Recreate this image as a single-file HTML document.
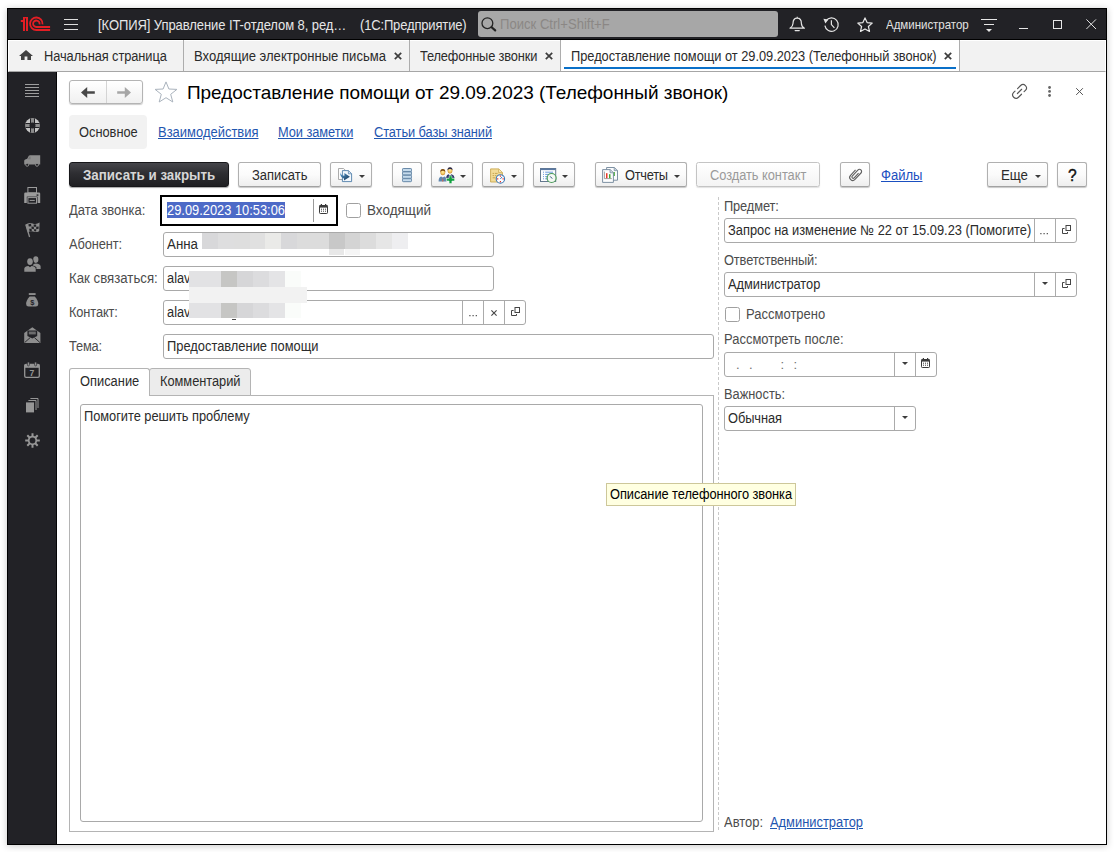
<!DOCTYPE html>
<html><head><meta charset="utf-8">
<style>
*{box-sizing:border-box;margin:0;padding:0}
html,body{width:1114px;height:852px;overflow:hidden;background:#fff}
body{font-family:"Liberation Sans",sans-serif;font-size:13px;color:#333;position:relative}
.a{position:absolute}
svg{position:absolute;overflow:visible}
#win{position:absolute;left:7px;top:8px;width:1100px;height:837px;border:1px solid #000;background:#fff;box-shadow:0 1px 7px rgba(0,0,0,.22)}
#tb{position:absolute;left:8px;top:9px;width:1098px;height:31px;background:#222226;border-bottom:1px solid #000}
#tabs{position:absolute;left:8px;top:40px;width:1098px;height:32px;background:#f2f2f2;border:1px solid #fff;border-bottom:1px solid #a6a6a6}
#side{position:absolute;left:8px;top:72px;width:49px;height:772px;background:#222226;border-right:1px solid #050506}
.t{position:absolute;white-space:nowrap;line-height:16px;font-size:13px}
.sep{position:absolute;top:40px;width:1px;height:31px;background:#adadad}
.btn{position:absolute;top:163px;height:25px;border:1px solid #b0b0b0;border-bottom-color:#a2a2a2;border-radius:2.5px;background:linear-gradient(#ffffff 0%,#fbfbfb 50%,#eeeeee 100%);box-shadow:0 1px 1px rgba(0,0,0,.22)}
.inp{position:absolute;height:25px;border:1px solid #a9a9a9;border-radius:3px;background:#fff}
.dv{position:absolute;width:1px;background:#ababab}
.lbl{color:#4c4c4c}
.val{color:#2b2b2b}
.lnk{color:#1f56b0;text-decoration:underline;text-underline-offset:1px}
.chk{position:absolute;width:15px;height:15px;border:1px solid #a0a0a0;border-radius:2.5px;background:#fff}
.arr{position:absolute;width:0;height:0;border-left:3px solid transparent;border-right:3px solid transparent;border-top:3px solid #3c3c3c}
.mz{position:absolute}
</style></head><body>
<div id="win"></div>
<div id="tb"></div>
<div id="tabs"></div>
<div id="side"></div>

<!-- ===== title bar ===== -->
<svg style="left:20px;top:16px" width="31" height="16" viewBox="0 0 31 16"><g fill="#e31e24"><rect x="3" y="1" width="2" height="14"></rect><rect x="6" y="1" width="2" height="14"></rect><rect x="3" y="1" width="5" height="1.4"></rect><rect x="0.8" y="4" width="2.4" height="2"></rect></g><g fill="none" stroke="#e31e24" stroke-width="1.8"><path d="M22.55 8.3 A6.25 6.25 0 1 0 16.3 14 H30.1"></path><path d="M19.55 8.3 A3.25 3.25 0 1 0 16.3 11 H30.1"></path></g></svg>
<div class="a" style="left:64px;top:19px;width:14px;height:1px;background:#dedede"></div>
<div class="a" style="left:64px;top:24px;width:14px;height:1px;background:#dedede"></div>
<div class="a" style="left:64px;top:29px;width:14px;height:1px;background:#dedede"></div>
<div class="t" style="left: 97.75px; color: rgb(230, 230, 230); font-size: 14px; letter-spacing: -0.093px; transform: scaleX(0.93); transform-origin: 0px 50%; top: 16.65px;">[КОПИЯ] Управление IT-отделом 8, ред…</div>
<div class="t" style="left: 360px; color: rgb(230, 230, 230); font-size: 14px; letter-spacing: -0.181px; transform: scaleX(0.93); transform-origin: 0px 50%; top: 16.65px;">(1С:Предприятие)</div>
<div class="a" style="left:478px;top:11px;width:300px;height:26px;background:#a7a7a7;border-radius:3px"></div>
<svg style="left:481px;top:17px" width="16" height="15" viewBox="0 0 16 15"><circle cx="6.4" cy="6.2" r="5.4" fill="none" stroke="#242424" stroke-width="1.3"></circle><path d="M10.6 10.2 L14.2 13.4" stroke="#242424" stroke-width="2.2" stroke-linecap="round"></path></svg>
<div class="t" style="left: 500px; color: rgb(139, 135, 133); font-size: 14px; letter-spacing: 0px; transform: scaleX(0.935); transform-origin: 0px 50%; top: 15.75px;">Поиск Ctrl+Shift+F</div>
<!-- bell -->
<svg style="left:789px;top:16px" width="16" height="17" viewBox="0 0 16 17"><path d="M8.2 0.8 V2.2 M8.2 2.2 C5 2.2 4 4.8 4 7.4 C4 10 2.8 11 1 12.2 H15.4 C13.6 11 12.4 10 12.4 7.4 C12.4 4.8 11.4 2.2 8.2 2.2 Z" fill="none" stroke="#e4e4e4" stroke-width="1.2" stroke-linejoin="round"></path><path d="M6.2 14.6 H10.2" stroke="#e4e4e4" stroke-width="1.4" stroke-linecap="round"></path></svg>
<!-- history -->
<svg style="left:823px;top:16px" width="17" height="17" viewBox="0 0 17 17"><path d="M3 4.8 A6.7 6.7 0 1 1 1.9 9.6" fill="none" stroke="#e4e4e4" stroke-width="1.2"></path><path d="M0.4 2.8 L5.4 3.4 L2.4 7.6 Z" fill="#e4e4e4"></path><path d="M8.4 4.2 V8.6 L11.4 11.8" fill="none" stroke="#e4e4e4" stroke-width="1.2"></path></svg>
<!-- star -->
<svg style="left:857px;top:17px" width="16" height="15" viewBox="0 0 16 15"><path d="M8 0.9 L10.1 5.6 L15.2 6.1 L11.4 9.5 L12.5 14.4 L8 11.9 L3.5 14.4 L4.6 9.5 L0.8 6.1 L5.9 5.6 Z" fill="none" stroke="#e8e8e8" stroke-width="1.2" stroke-linejoin="round"></path></svg>
<div class="t" style="left: 885.5px; color: rgb(226, 226, 226); font-size: 12.4px; letter-spacing: -0.033px; transform: scaleX(0.93); transform-origin: 0px 50%; top: 17.45px;">Администратор</div>
<!-- menu lines -->
<div class="a" style="left:981px;top:19px;width:16px;height:1.4px;background:#e6e6e6"></div>
<div class="a" style="left:984px;top:24px;width:10px;height:1.4px;background:#e6e6e6"></div>
<div class="a" style="left:986px;top:29px;width:0;height:0;border-left:3px solid transparent;border-right:3px solid transparent;border-top:3px solid #e6e6e6"></div>
<!-- window controls -->
<div class="a" style="left:1019px;top:27.5px;width:9px;height:1.3px;background:#e6e6e6"></div>
<div class="a" style="left:1053px;top:20px;width:9px;height:9px;border:1.3px solid #e6e6e6"></div>
<svg style="left:1086px;top:19px" width="11" height="11" viewBox="0 0 11 11"><path d="M0.4 0.4 L10 10 M10 0.4 L0.4 10" stroke="#e0e0e0" stroke-width="1"></path></svg>

<!-- ===== open-windows tab strip ===== -->
<svg style="left:18.5px;top:50px" width="14" height="10" viewBox="0 0 14 10"><path d="M7 0 L14 6 H12 V10 H8.4 V6.4 H5.6 V10 H2 V6 H0 Z" fill="#424242"></path></svg>
<div class="t val" style="left: 44px; letter-spacing: -0.084px; font-size: 13.8px; transform: scaleX(0.93); transform-origin: 0px 50%; top: 48.72px;">Начальная страница</div>
<div class="sep" style="left:183px"></div>
<div class="t val" style="left: 193.9px; letter-spacing: 0px; font-size: 13.8px; transform: scaleX(0.9474); transform-origin: 0px 50%; top: 48.72px;">Входящие электронные письма</div>
<svg style="left:393.5px;top:52px" width="8" height="8" viewBox="0 0 8 8"><path d="M0.8 0.8 L7.2 7.2 M7.2 0.8 L0.8 7.2" stroke="#3d3d3d" stroke-width="1.7"></path></svg>
<div class="sep" style="left:409px"></div>
<div class="t val" style="left: 419.5px; letter-spacing: -0.162px; font-size: 13.8px; transform: scaleX(0.93); transform-origin: 0px 50%; top: 48.72px;">Телефонные звонки</div>
<svg style="left:544.5px;top:52px" width="8" height="8" viewBox="0 0 8 8"><path d="M0.8 0.8 L7.2 7.2 M7.2 0.8 L0.8 7.2" stroke="#3d3d3d" stroke-width="1.7"></path></svg>
<div class="sep" style="left:560px"></div>
<div class="a" style="left:561px;top:40px;width:398px;height:31px;background:#fff"></div>
<div class="t val" style="left: 571px; letter-spacing: -0.029px; font-size: 13.8px; transform: scaleX(0.93); transform-origin: 0px 50%; top: 48.72px;">Предоставление помощи от 29.09.2023 (Телефонный звонок)</div>
<svg style="left:944px;top:52px" width="8" height="8" viewBox="0 0 8 8"><path d="M0.8 0.8 L7.2 7.2 M7.2 0.8 L0.8 7.2" stroke="#3d3d3d" stroke-width="1.7"></path></svg>
<div class="a" style="left:564px;top:67px;width:392px;height:2px;background:#0a70c8"></div>
<div class="sep" style="left:959px"></div>

<!-- ===== sidebar icons ===== -->
<svg style="left:25px;top:84px" width="14" height="13" viewBox="0 0 14 13"><path d="M0 0.5H14M0 3.5H14M0 6.5H14M0 9.5H14M0 12.5H14" stroke="#9e9e9e" stroke-width="1"></path></svg>
<!-- lifebuoy -->
<svg style="left:25px;top:117.7px" width="15" height="15" viewBox="0 0 15 15"><defs><clipPath id="lb"><circle cx="7.5" cy="7.5" r="7.4"></circle></clipPath></defs><g clip-path="url(#lb)"><rect width="15" height="15" fill="#c4c4c4"></rect><rect x="5" y="0" width="5" height="15" fill="#222226"></rect><rect x="0" y="5" width="15" height="5" fill="#222226"></rect><rect x="6" y="0" width="3" height="15" fill="#8c8c8c"></rect><rect x="0" y="6" width="15" height="3" fill="#8c8c8c"></rect></g><circle cx="7.5" cy="7.5" r="3" fill="#222226"></circle></svg>
<!-- van -->
<svg style="left:24px;top:154.5px" width="17" height="12" viewBox="0 0 17 12"><path d="M6 0.2 H16.2 V9.4 H0.2 V6 Q0.2 5 1.2 4.6 L3.2 3.8 L4.8 0.8 Q5.2 0.2 6 0.2 Z" fill="#8e8e8e"></path><path d="M5.4 1.4 L3.8 4.2 H6.6 V1.4 Z" fill="#7a7a7a"></path><circle cx="3.2" cy="9.8" r="1.5" fill="#222226" stroke="#8e8e8e" stroke-width="0.9"></circle><circle cx="13" cy="9.8" r="1.5" fill="#222226" stroke="#8e8e8e" stroke-width="0.9"></circle></svg>
<!-- printer -->
<svg style="left:24px;top:186.8px" width="17" height="17" viewBox="0 0 17 17"><rect x="3.9" y="0.5" width="8.6" height="5.4" fill="#222226" stroke="#9c9c9c" stroke-width="1"></rect><path d="M1.4 5.6 H15 Q16.2 5.6 16.2 6.8 V16 H0.2 V6.8 Q0.2 5.6 1.4 5.6 Z" fill="#9c9c9c"></path><rect x="2.8" y="9.6" width="10.8" height="7" fill="#222226"></rect><rect x="3.9" y="10.6" width="8.6" height="5.6" fill="#222226" stroke="#9c9c9c" stroke-width="1"></rect><path d="M5.6 13.4 H10.8" stroke="#9c9c9c" stroke-width="1"></path><rect x="12.6" y="7.4" width="1.8" height="1.4" fill="#222226"></rect></svg>
<!-- flag -->
<svg style="left:24.5px;top:222.4px" width="16" height="16" viewBox="0 0 16 16"><path d="M0.6 2.4 Q4 0 7.6 1.4 T14.6 0.6 L14.2 9.2 Q11 10.8 8 9.6 T3 10.6 Z" fill="#8e8e8e"></path><g fill="#222226"><path d="M3.4 2.2 L6 1.8 L6.4 4.2 L3.8 4.6Z"></path><path d="M8.6 2.4 L11.2 2.4 L11.2 4.8 L8.8 4.8Z"></path><path d="M6.4 4.4 L8.8 4.8 L9 7.2 L6.6 6.8Z"></path><path d="M11.2 4.8 L13.6 4.4 L13.6 6.8 L11.2 7.2Z"></path><path d="M4.2 6.8 L6.6 6.8 L6.8 9 L4.6 9.2Z"></path><path d="M9 7.2 L11.2 7.2 L11.2 9.4 L9.2 9.2Z"></path></g><path d="M0.8 2.6 L4.6 15" stroke="#8e8e8e" stroke-width="1.3"></path></svg>
<!-- people -->
<svg style="left:23.5px;top:256px" width="17" height="16" viewBox="0 0 17 16"><ellipse cx="11.8" cy="3.6" rx="2.6" ry="3.3" fill="#8e8e8e"></ellipse><path d="M8.6 13 L8.8 9.4 Q9.2 7.6 11.8 7.6 Q16.4 8 16.6 10.6 V13 Z" fill="#8e8e8e"></path><ellipse cx="6" cy="5.6" rx="3.5" ry="4.1" fill="#222226"></ellipse><path d="M-0.4 16 V11.6 Q0 9.4 6 9.2 Q12 9.4 12.4 11.6 V16 Z" fill="#222226"></path><ellipse cx="6" cy="5.6" rx="2.8" ry="3.4" fill="#8e8e8e"></ellipse><path d="M0.3 15.8 V12.4 Q0.8 10.4 4.4 10 L6 11.2 L7.6 10 Q11.2 10.4 11.7 12.4 V15.8 Z" fill="#8e8e8e"></path></svg>
<!-- money bag -->
<svg style="left:26px;top:292.5px" width="13" height="14" viewBox="0 0 13 14"><rect x="2.8" y="0.1" width="6.8" height="1.9" fill="#8e8e8e"></rect><path d="M3.6 3.4 H8.8 Q12.4 7.4 12.3 11 Q12.2 13.5 9.8 13.5 H2.6 Q0.2 13.5 0.1 11 Q0 7.4 3.6 3.4 Z" fill="#8e8e8e"></path><text x="6.2" y="12" font-size="7.4" font-weight="700" text-anchor="middle" fill="#222226" font-family="Liberation Sans">$</text></svg>
<!-- envelope -->
<svg style="left:24px;top:326.8px" width="17" height="16" viewBox="0 0 17 16"><path d="M0.2 6 L8.3 0.2 L16.4 6 V16 H0.2 Z" fill="#8e8e8e"></path><path d="M3.4 3.6 H13.2 V9 L8.3 11.6 L3.4 9 Z" fill="#222226"></path><path d="M4.8 5.2 H11.8 M4.8 6.8 H11.8" stroke="#8e8e8e" stroke-width="1"></path><path d="M0.6 15.6 L6.2 10.6 M16 15.6 L10.4 10.6" stroke="#222226" stroke-width="0.9"></path></svg>
<!-- calendar -->
<svg style="left:24px;top:362px" width="16" height="16" viewBox="0 0 16 16"><rect x="0.7" y="2.4" width="14.6" height="13" rx="1.4" fill="none" stroke="#969696" stroke-width="1.3"></rect><rect x="0.7" y="2.4" width="14.6" height="3.4" fill="#969696"></rect><rect x="3.4" y="0.1" width="2" height="3.8" rx="0.9" fill="#969696" stroke="#222226" stroke-width="0.6"></rect><rect x="10.6" y="0.1" width="2" height="3.8" rx="0.9" fill="#969696" stroke="#222226" stroke-width="0.6"></rect><text x="8" y="13.8" font-size="8.6" font-weight="700" text-anchor="middle" fill="#969696" font-family="Liberation Sans">7</text></svg>
<!-- stack -->
<svg style="left:25.8px;top:397.7px" width="13" height="15" viewBox="0 0 13 15"><path d="M4.4 0.5 H12 V10" fill="none" stroke="#969696" stroke-width="1"></path><path d="M2.4 2.5 H10 V12" fill="none" stroke="#969696" stroke-width="1"></path><rect x="0" y="4.4" width="8" height="10" fill="#969696"></rect></svg>
<!-- gear -->
<svg style="left:24.6px;top:432.8px" width="15" height="15" viewBox="0 0 15 15"><g stroke="#969696" stroke-width="2"><path d="M7.5 0.2 V14.8 M0.2 7.5 H14.8 M2.3 2.3 L12.7 12.7 M12.7 2.3 L2.3 12.7"></path></g><circle cx="7.5" cy="7.5" r="4.7" fill="#969696"></circle><circle cx="7.5" cy="7.5" r="2.9" fill="#222226"></circle></svg>

<!-- ===== form header ===== -->
<div class="a" style="left:69px;top:80px;width:74px;height:24px;border:1px solid #b4b4b4;border-radius:3px;background:linear-gradient(#fff,#f0f0f0);box-shadow:0 1px 1px rgba(0,0,0,.2)"></div>
<div class="dv" style="left:106px;top:81px;height:22px;background:#d4d4d4"></div>
<svg style="left:81px;top:87px" width="14" height="11" viewBox="0 0 14 11"><path d="M0 5.5 L6.2 0.1 V4.2 H13.8 V6.8 H6.2 V10.9 Z" fill="#484848"></path></svg>
<svg style="left:117px;top:87px" width="14" height="11" viewBox="0 0 14 11"><path d="M14 5.5 L7.8 0.1 V4.2 H0.2 V6.8 H7.8 V10.9 Z" fill="#a6a6a6"></path></svg>
<svg style="left:153.5px;top:81px" width="24" height="22" viewBox="0 0 24 22"><path d="M12 0.9 L14.9 8 L22.9 8.4 L16.7 13.3 L18.8 21 L12 16.7 L5.2 21 L7.3 13.3 L1.1 8.4 L9.1 8 Z" fill="#fff" stroke="#aab3bd" stroke-width="1" stroke-linejoin="miter"></path></svg>
<div class="t" style="left: 186.9px; font-size: 19px; line-height: 24px; color: rgb(0, 0, 0); letter-spacing: -0.035px; top: 80.82px;">Предоставление помощи от 29.09.2023 (Телефонный звонок)</div>
<!-- link / dots / close -->
<svg style="left:1011px;top:83px" width="17" height="17" viewBox="0 0 17 17"><g fill="none" stroke="#555" stroke-width="1.15" stroke-linecap="round" transform="translate(8.55,8.4) rotate(-45)"><path d="M0.6 -3.4 H4.9 A3.4 3.4 0 0 1 4.9 3.4 H3"></path><path d="M-0.6 3.4 H-4.9 A3.4 3.4 0 0 1 -4.9 -3.4 H-3"></path><path d="M-3 0 H3"></path></g></svg>



<svg style="left:1045px;top:84px" width="9" height="15" viewBox="0 0 9 15"><circle cx="4.55" cy="3.5" r="1.4" fill="#666"></circle><circle cx="4.55" cy="7.45" r="1.4" fill="#666"></circle><circle cx="4.55" cy="11.5" r="1.4" fill="#666"></circle></svg>
<svg style="left:1076px;top:88px" width="7" height="7" viewBox="0 0 7 7"><path d="M0.2 0.2 L6.9 6.9 M6.9 0.2 L0.2 6.9" stroke="#555" stroke-width="1"></path></svg>
<!-- navigation links -->
<div class="a" style="left:69px;top:115px;width:78px;height:34px;background:#f2f2f2;border-radius:4px"></div>
<div class="t" style="left: 79px; color: rgb(43, 43, 43); letter-spacing: -0.006px; font-size: 13.8px; transform: scaleX(0.93); transform-origin: 0px 50%; top: 125.47px;">Основное</div>
<div class="t lnk" style="left: 157.5px; letter-spacing: 0px; font-size: 13.8px; transform: scaleX(0.9399); transform-origin: 0px 50%; top: 125.47px;">Взаимодействия</div>
<div class="t lnk" style="left: 278.25px; letter-spacing: -0.065px; font-size: 13.8px; transform: scaleX(0.93); transform-origin: 0px 50%; top: 125.47px;">Мои заметки</div>
<div class="t lnk" style="left: 373.75px; letter-spacing: -0.084px; font-size: 13.8px; transform: scaleX(0.93); transform-origin: 0px 50%; top: 125.47px;">Статьи базы знаний</div>

<!-- ===== command bar ===== -->
<div class="a" style="left:69px;top:162px;width:160px;height:25px;border:1px solid #17171a;border-radius:3px;background:linear-gradient(#45454a 0%,#2e2e32 45%,#1f1f22 100%);box-shadow:0 1px 1px rgba(0,0,0,.35)"></div>
<div class="t" style="left: 82.75px; color: rgb(214, 214, 214); font-weight: 700; font-size: 14px; letter-spacing: 0px; transform: scaleX(0.9532); transform-origin: 0px 50%; top: 167.15px;">Записать и закрыть</div>
<div class="btn" style="left:238px;top:162px;width:83px"></div>
<div class="t val" style="left: 251.7px; letter-spacing: 0px; font-size: 13.8px; transform: scaleX(0.9395); transform-origin: 0px 50%; top: 168.22px;">Записать</div>

<div class="btn" style="left:330px;top:162px;width:42px"></div>
<svg style="left:338px;top:168px" width="14" height="14" viewBox="0 0 14 14"><defs><linearGradient id="ga" x1="0" y1="0" x2="1" y2="1"><stop offset="0" stop-color="#5aa2d8"></stop><stop offset="1" stop-color="#12304f"></stop></linearGradient></defs><path d="M0.5 0.5 H5.6 L7.4 2.3 V11.5 H0.5 Z" fill="#fcfcfc" stroke="#a2a2a2" stroke-width="0.9"></path><path d="M4.4 2.6 H10.6 L13.6 5.6 V13.6 H4.4 Z" fill="#f2f7fc" stroke="#4f7ea9" stroke-width="0.9"></path><path d="M10.4 2.8 V5.8 H13.4" fill="#cfe0ee" stroke="#4f7ea9" stroke-width="0.7"></path><path d="M2 4 Q2.8 7.6 6.4 7.8 V5 L11.9 8.8 L6 12.6 V10.4 Q2.2 10 2 4Z" fill="url(#ga)"></path></svg>
<div class="arr" style="left:359px;top:175px"></div>

<div class="btn" style="left:392px;top:162px;width:30px"></div>
<svg style="left:402px;top:168px" width="10" height="15" viewBox="0 0 10 15"><rect x="0.3" y="0.3" width="9.4" height="13.6" rx="1.4" fill="#7f9db8"></rect><rect x="0.5" y="0.5" width="9" height="3" rx="1" fill="#c6dbec" stroke="#6687a6" stroke-width="0.95"></rect><rect x="0.5" y="3.9" width="9" height="3" rx="1" fill="#c6dbec" stroke="#6687a6" stroke-width="0.95"></rect><rect x="0.5" y="7.3" width="9" height="3" rx="1" fill="#c6dbec" stroke="#6687a6" stroke-width="0.95"></rect><rect x="0.5" y="10.7" width="9" height="3" rx="1" fill="#c6dbec" stroke="#6687a6" stroke-width="0.95"></rect></svg>

<div class="btn" style="left:431px;top:162px;width:42px"></div>
<svg style="left:437.5px;top:166.5px" width="18" height="17" viewBox="0 0 18 17"><defs><radialGradient id="gf" cx="0.5" cy="0.45" r="0.6"><stop offset="0" stop-color="#fff2a8"></stop><stop offset="0.6" stop-color="#f0c25a"></stop><stop offset="1" stop-color="#b87a28"></stop></radialGradient></defs><path d="M8.2 11 Q8.4 7.6 10.4 7.2 L12 8.4 L13.6 7.2 Q16.2 7.8 16.6 11 Z" fill="#2a3266"></path><ellipse cx="12" cy="3.4" rx="2.4" ry="3" fill="url(#gf)"></ellipse><path d="M9.5 3.2 Q9.4 0.2 12 0.2 Q14.6 0.2 14.5 3.2 Q13.2 1.9 12 2 Q10.8 1.9 9.5 3.2Z" fill="#2c2a4c"></path><path d="M0.6 14.4 Q0.6 9.8 3.2 9.4 L4.8 10.6 L6.4 9.4 Q8.6 9.8 8.6 14.4 Z" fill="#5f86ae"></path><path d="M4.8 10.4 L4.2 14.4 H5.4 Z" fill="#e8603a"></path><ellipse cx="4.8" cy="5.2" rx="2.4" ry="3" fill="url(#gf)"></ellipse><path d="M2.3 5 Q2.2 2 4.8 2 Q7.4 2 7.3 5 Q6 3.7 4.8 3.8 Q3.6 3.7 2.3 5Z" fill="#7a4a12"></path><path d="M11.1 8.8 H13.9 V11.2 H16.6 V14 H13.9 V16.6 H11.1 V14 H8.4 V11.2 H11.1 Z" fill="#12a040" stroke="#fff" stroke-width="0.5"></path></svg>
<div class="arr" style="left:460px;top:175px"></div>

<div class="btn" style="left:482px;top:162px;width:42px"></div>
<svg style="left:490px;top:167.5px" width="16" height="16" viewBox="0 0 16 16"><path d="M0.6 0.9 H8.8 L12.4 4.4 V14 H0.6 Z" fill="#f3dc98" stroke="#c9a850" stroke-width="0.9" stroke-linejoin="round"></path><path d="M8.6 1.1 V4.6 H12.2" fill="#f8e8b8" stroke="#c9a850" stroke-width="0.7"></path><path d="M2.6 5.4 H4.2 M5 5.4 H7.6 M2.6 7.6 H4.2 M5 7.6 H6.4 M2.6 9.8 H5.4" stroke="#c2a048" stroke-width="0.9"></path><circle cx="10.4" cy="10.9" r="4.2" fill="#fff" stroke="#3d78b8" stroke-width="1.1"></circle><path d="M10.4 10.9 L12.2 8.8" stroke="#3d78b8" stroke-width="1"></path><path d="M10.4 7.6 V8.8 M10.4 13 V14.2 M7.1 10.9 H8.3 M12.5 10.9 H13.7" stroke="#e82a20" stroke-width="1.1"></path></svg>
<div class="arr" style="left:511px;top:175px"></div>

<div class="btn" style="left:533px;top:162px;width:42px"></div>
<svg style="left:540px;top:168px" width="17" height="16" viewBox="0 0 17 16"><rect x="0.5" y="0.5" width="15.2" height="13" fill="#fdfdfe" stroke="#64788e" stroke-width="1"></rect><rect x="0.5" y="0.5" width="15.2" height="1.6" fill="#5a78a2"></rect><path d="M3 4.2 H4 M5.2 4.2 H13 M3 6.4 H4 M5.2 6.4 H10.6 M3 8.6 H4 M5.2 8.6 H8 M3 10.8 H4 M5.2 10.8 H7" stroke="#5a90d8" stroke-width="0.9"></path><circle cx="11.6" cy="10" r="4.5" fill="#f4f8f4" stroke="#4a9a58" stroke-width="1.2"></circle><path d="M10.2 8.4 L12.2 10.6" fill="none" stroke="#2c4a7a" stroke-width="1"></path></svg>
<div class="arr" style="left:562px;top:175px"></div>

<div class="btn" style="left:595px;top:162px;width:92px"></div>
<svg style="left:602px;top:167px" width="17" height="16" viewBox="0 0 17 16"><path d="M4.6 0.5 H12.4 L15.5 3.4 V13.2 H4.6 Z" fill="#fbfcfd" stroke="#6f8598" stroke-width="0.9" stroke-linejoin="round"></path><path d="M12.2 0.7 V3.6 H15.3" fill="#c8d2dc" stroke="#6f8598" stroke-width="0.7"></path><rect x="11.2" y="5" width="1.6" height="4" fill="#3fa82e"></rect><path d="M0.6 2.6 H8.2 L11.4 5.6 V15.4 H0.6 Z" fill="#fdfdfe" stroke="#6f8598" stroke-width="0.9" stroke-linejoin="round"></path><path d="M8 2.8 V5.8 H11.2" fill="#c8d2dc" stroke="#6f8598" stroke-width="0.7"></path><path d="M2.4 4.6 V11.6 H9.8" fill="none" stroke="#8a8a8a" stroke-width="0.8"></path><rect x="4" y="6.2" width="1.5" height="5" fill="#e8392a"></rect><rect x="7" y="7.2" width="1.5" height="4" fill="#3fa82e"></rect></svg>
<div class="t val" style="left: 625px; letter-spacing: -0.289px; font-size: 13.8px; transform: scaleX(0.93); transform-origin: 0px 50%; top: 168.22px;">Отчеты</div>
<div class="arr" style="left:674px;top:175px"></div>

<div class="btn" style="left:696px;top:162px;width:124px;background:linear-gradient(#fff,#f4f4f4);border-color:#c4c4c4;box-shadow:0 1px 1px rgba(0,0,0,.12)"></div>
<div class="t" style="left: 709.75px; color: rgb(154, 154, 154); letter-spacing: -0.041px; font-size: 13.8px; transform: scaleX(0.93); transform-origin: 0px 50%; top: 168.22px;">Создать контакт</div>

<div class="btn" style="left:840px;top:162px;width:30px"></div>
<svg style="left:847px;top:167px" width="16" height="16" viewBox="0 0 16 16"><g transform="rotate(43 8 8) translate(-0.64 -0.8) scale(1.08)" fill="none" stroke="#606060" stroke-width="1.05"><path d="M5.2 4.4 V11.2 A2.8 2.8 0 0 0 10.8 11.2 V3 A2 2 0 0 0 6.8 3 V10.6 A1.2 1.2 0 0 0 9.2 10.6 V4.6"></path></g></svg>
<div class="t lnk" style="left: 881px; font-size: 14px; color: rgb(26, 79, 192); letter-spacing: 0px; transform: scaleX(0.9329); transform-origin: 0px 50%; top: 167.15px;">Файлы</div>

<div class="btn" style="left:987px;top:162px;width:61px"></div>
<div class="t val" style="left: 1001px; letter-spacing: 0px; font-size: 13.8px; transform: scaleX(0.9616); transform-origin: 0px 50%; top: 168.22px;">Еще</div>
<div class="arr" style="left:1035px;top:175px"></div>
<div class="btn" style="left:1057px;top:162px;width:30px"></div>
<div class="t" style="left: 1068.1px; color: rgb(17, 17, 17); font-weight: 400; font-size: 15.6px; -webkit-text-stroke: 0.4px rgb(17, 17, 17); top: 167.99px;">?</div>

<!--TOOLBAR_END-->
<!-- ===== left column ===== -->
<div class="t lbl" style="left: 68.75px; letter-spacing: 0px; font-size: 13.8px; transform: scaleX(0.941); transform-origin: 0px 50%; top: 203.22px;">Дата звонка:</div>
<div class="a" style="left:160px;top:195px;width:178px;height:31px;border:2px solid #000;background:#fff"></div>
<div class="a" style="left:166.5px;top:202px;width:118.5px;height:16px;background:#4d6ac7"></div>
<div class="t" style="left: 167px; color: rgb(255, 255, 255); letter-spacing: 0px; font-size: 13.8px; transform: scaleX(0.9321); transform-origin: 0px 50%; top: 203.22px;">29.09.2023 10:53:06</div>
<div class="dv" style="left:313px;top:199px;height:23px;background:#9a9a9a"></div>
<svg style="left:319px;top:204px" width="9" height="10" viewBox="0 0 9 10"><rect x="0.5" y="1.5" width="8" height="8" rx="0.8" fill="#fff" stroke="#3a3a3a" stroke-width="1"></rect><rect x="0.5" y="1.2" width="8" height="2.4" fill="#3a3a3a"></rect><rect x="1.8" y="0" width="1.2" height="2" fill="#3a3a3a"></rect><rect x="6" y="0" width="1.2" height="2" fill="#3a3a3a"></rect><path d="M2 5.2 H3 M4 5.2 H5 M6 5.2 H7 M2 7.2 H3 M4 7.2 H5 M6 7.2 H7" stroke="#3a3a3a" stroke-width="1"></path></svg>
<div class="chk" style="left:346px;top:203px"></div>
<div class="t lbl" style="left: 367px; letter-spacing: 0px; font-size: 13.8px; transform: scaleX(0.9778); transform-origin: 0px 50%; top: 203.22px;">Входящий</div>

<div class="t lbl" style="left: 68.75px; letter-spacing: -0.107px; font-size: 13.8px; transform: scaleX(0.93); transform-origin: 0px 50%; top: 236.97px;">Абонент:</div>
<div class="inp" style="left:163px;top:232px;width:331px"></div>
<div class="t val" style="left: 167px; letter-spacing: 0px; font-size: 13.8px; transform: scaleX(0.965); transform-origin: 0px 50%; top: 236.97px;">Анна</div>

<div class="t lbl" style="left: 68.75px; letter-spacing: 0px; font-size: 13.8px; transform: scaleX(0.9591); transform-origin: 0px 50%; top: 270.72px;">Как связаться:</div>
<div class="inp" style="left:163px;top:266px;width:331px"></div>
<div class="t val" style="left: 167px; letter-spacing: -0.011px; font-size: 13.8px; transform: scaleX(0.93); transform-origin: 0px 50%; top: 270.72px;">alav</div>

<div class="t lbl" style="left: 68.75px; letter-spacing: -0.137px; font-size: 13.8px; transform: scaleX(0.93); transform-origin: 0px 50%; top: 304.97px;">Контакт:</div>
<div class="inp" style="left:163px;top:300px;width:363px"></div>
<div class="t val" style="left: 167px; letter-spacing: -0.011px; font-size: 13.8px; transform: scaleX(0.93); transform-origin: 0px 50%; top: 304.97px;">alav</div>
<div class="dv" style="left:462px;top:301px;height:23px"></div>
<div class="dv" style="left:483px;top:301px;height:23px"></div>
<div class="dv" style="left:504px;top:301px;height:23px"></div>
<svg style="left:468.5px;top:315px" width="8" height="2" viewBox="0 0 8 2"><path d="M0.3 0.1h1.2v1.2h-1.2zM3.5 0.1h1.2v1.2h-1.2zM6.7 0.1h1.2v1.2h-1.2z" fill="#4a4a4a"></path></svg>
<svg style="left:490.5px;top:309.5px" width="6" height="6" viewBox="0 0 6 6"><path d="M0.4 0.4 L5.6 5.6 M5.6 0.4 L0.4 5.6" stroke="#444" stroke-width="1.1"></path></svg>
<svg style="left:511px;top:307px" width="9" height="9" viewBox="0 0 9 9"><rect x="4" y="0.5" width="4.5" height="5" fill="none" stroke="#444" stroke-width="1"></rect><path d="M2.6 3.5 H0.5 V8.5 H5.5 V7" fill="none" stroke="#444" stroke-width="1"></path></svg>

<div class="t lbl" style="left: 68.75px; letter-spacing: -0.169px; font-size: 13.8px; transform: scaleX(0.93); transform-origin: 0px 50%; top: 338.97px;">Тема:</div>
<div class="inp" style="left:163px;top:334px;width:551px"></div>
<div class="t val" style="left: 167px; letter-spacing: 0px; font-size: 13.8px; transform: scaleX(0.9331); transform-origin: 0px 50%; top: 338.97px;">Предоставление помощи</div>

<!-- redaction mosaics -->
<div class="mz" style="left:202px;top:233px;width:205.8px;height:16px;background:linear-gradient(90deg,#d8d8da 0.00% 7.69%,#dededf 7.69% 15.38%,#dedede 15.38% 23.08%,#e0e0e0 23.08% 30.77%,#eaeae8 30.77% 38.46%,#d8d8da 38.46% 46.15%,#dcdcdc 46.15% 53.85%,#dcdcdc 53.85% 61.54%,#c8c8c8 61.54% 69.23%,#d4d4d4 69.23% 76.92%,#dcdcdc 76.92% 84.62%,#e6e6e6 84.62% 92.31%,#eeeef0 92.31% 100.00%)"></div>
<div class="mz" style="left:328.6px;top:249px;width:15.8px;height:5.5px;background:#e8e8e8"></div>
<div class="mz" style="left:344.5px;top:249px;width:15.8px;height:5.5px;background:#f5f5f5"></div>
<div class="mz" style="left:189.2px;top:267.5px;width:112px;height:51px;background:#fff"></div>
<div class="mz" style="left:189.2px;top:270.7px;width:96px;height:16.1px;background:linear-gradient(90deg,#e2e2e4 0.00% 16.67%,#e2e2e4 16.67% 33.33%,#c6c6c4 33.33% 50.00%,#d6d6d8 50.00% 66.67%,#dcdcde 66.67% 83.33%,#e4e4e6 83.33% 100.00%)"></div>
<div class="mz" style="left:285.2px;top:270.7px;width:16px;height:16.1px;background:#fafcfa"></div>
<div class="mz" style="left:189.2px;top:286.8px;width:117.4px;height:15.9px;background:#f2f2f2"></div>
<div class="mz" style="left:189.2px;top:302.7px;width:96px;height:15.8px;background:linear-gradient(90deg,#e2e2e4 0.00% 16.67%,#e2e2e4 16.67% 33.33%,#c6c6c4 33.33% 50.00%,#d6d6d8 50.00% 66.67%,#dcdcde 66.67% 83.33%,#e4e4e6 83.33% 100.00%)"></div>
<div class="mz" style="left:285.2px;top:302.7px;width:16px;height:15.8px;background:#fafcfa"></div>

<div class="a" style="left:231.5px;top:318.6px;width:4.5px;height:1.2px;background:#4a4a4a"></div>
<!-- pages (tabs) -->
<div class="a" style="left:69px;top:395px;width:645px;height:437px;border:1px solid #b4b4b4;background:#fff"></div>
<div class="a" style="left:149px;top:368px;width:102px;height:28px;border:1px solid #b4b4b4;border-radius:3px 3px 0 0;background:#ececec"></div>
<div class="a" style="left:69px;top:368px;width:81px;height:28px;border:1px solid #b4b4b4;border-bottom:none;border-radius:3px 3px 0 0;background:#fff"></div>
<div class="t val" style="left: 79.5px; letter-spacing: 0px; font-size: 13.8px; transform: scaleX(0.9333); transform-origin: 0px 50%; top: 373.72px;">Описание</div>
<div class="t val" style="left: 159.5px; letter-spacing: -0.032px; font-size: 13.8px; transform: scaleX(0.93); transform-origin: 0px 50%; top: 373.72px;">Комментарий</div>
<div class="a" style="left:80px;top:404px;width:623px;height:418px;border:1px solid #a9a9a9;border-radius:3px;background:#fff"></div>
<div class="t val" style="left: 83.75px; letter-spacing: -0.032px; font-size: 13.8px; transform: scaleX(0.93); transform-origin: 0px 50%; top: 408.97px;">Помогите решить проблему</div>

<!-- column splitter -->
<div class="a" style="left:718px;top:197px;width:1px;height:635px;background:repeating-linear-gradient(#c9c9c9 0 3px,#fff 3px 5px)"></div>

<!-- ===== right column ===== -->
<div class="t lbl" style="left: 724.25px; letter-spacing: -0.126px; font-size: 13.8px; transform: scaleX(0.93); transform-origin: 0px 50%; top: 199.47px;">Предмет:</div>
<div class="inp" style="left:724px;top:218px;width:353px"></div>
<div class="t val" style="left: 728px; letter-spacing: 0px; font-size: 13.8px; transform: scaleX(0.932); transform-origin: 0px 50%; top: 223.22px;">Запрос на изменение № 22 от 15.09.23 (Помогите)</div>
<div class="dv" style="left:1034px;top:219px;height:23px"></div>
<div class="dv" style="left:1055px;top:219px;height:23px"></div>
<svg style="left:1040.2px;top:233px" width="8" height="2" viewBox="0 0 8 2"><path d="M0.3 0.1h1.2v1.2h-1.2zM3.5 0.1h1.2v1.2h-1.2zM6.7 0.1h1.2v1.2h-1.2z" fill="#4a4a4a"></path></svg>
<svg style="left:1062px;top:225px" width="9" height="9" viewBox="0 0 9 9"><rect x="4" y="0.5" width="4.5" height="5" fill="none" stroke="#444" stroke-width="1"></rect><path d="M2.6 3.5 H0.5 V8.5 H5.5 V7" fill="none" stroke="#444" stroke-width="1"></path></svg>

<div class="t lbl" style="left: 724.25px; letter-spacing: -0.131px; font-size: 13.8px; transform: scaleX(0.93); transform-origin: 0px 50%; top: 253.22px;">Ответственный:</div>
<div class="inp" style="left:724px;top:272px;width:353px"></div>
<div class="t val" style="left: 728px; letter-spacing: -0.027px; font-size: 13.8px; transform: scaleX(0.93); transform-origin: 0px 50%; top: 277.47px;">Администратор</div>
<div class="dv" style="left:1034px;top:273px;height:23px"></div>
<div class="dv" style="left:1055px;top:273px;height:23px"></div>
<div class="arr" style="left:1041.5px;top:282px"></div>
<svg style="left:1062px;top:279px" width="9" height="9" viewBox="0 0 9 9"><rect x="4" y="0.5" width="4.5" height="5" fill="none" stroke="#444" stroke-width="1"></rect><path d="M2.6 3.5 H0.5 V8.5 H5.5 V7" fill="none" stroke="#444" stroke-width="1"></path></svg>

<div class="chk" style="left:724.5px;top:307px"></div>
<div class="t lbl" style="left: 746px; letter-spacing: 0px; font-size: 13.8px; transform: scaleX(0.9431); transform-origin: 0px 50%; top: 306.97px;">Рассмотрено</div>

<div class="t lbl" style="left: 724.25px; letter-spacing: 0px; font-size: 13.8px; transform: scaleX(0.9393); transform-origin: 0px 50%; top: 332.47px;">Рассмотреть после:</div>
<div class="inp" style="left:724px;top:352px;width:213px"></div>
<div class="t" style="left: 736px; color: rgb(112, 112, 112); font-size: 13px; top: 357px;">.</div>
<div class="t" style="left: 749px; color: rgb(112, 112, 112); font-size: 13px; top: 357px;">.</div>
<div class="t" style="left: 780.5px; color: rgb(112, 112, 112); font-size: 13px; top: 357px;">:</div>
<div class="t" style="left: 793.5px; color: rgb(112, 112, 112); font-size: 13px; top: 357px;">:</div>
<div class="dv" style="left:894px;top:353px;height:23px"></div>
<div class="dv" style="left:915px;top:353px;height:23px"></div>
<div class="arr" style="left:901.5px;top:362px"></div>
<svg style="left:921px;top:358px" width="9" height="10" viewBox="0 0 9 10"><rect x="0.5" y="1.5" width="8" height="8" rx="0.8" fill="#fff" stroke="#3a3a3a" stroke-width="1"></rect><rect x="0.5" y="1.2" width="8" height="2.4" fill="#3a3a3a"></rect><rect x="1.8" y="0" width="1.2" height="2" fill="#3a3a3a"></rect><rect x="6" y="0" width="1.2" height="2" fill="#3a3a3a"></rect><path d="M2 5.2 H3 M4 5.2 H5 M6 5.2 H7 M2 7.2 H3 M4 7.2 H5 M6 7.2 H7" stroke="#3a3a3a" stroke-width="1"></path></svg>

<div class="t lbl" style="left: 724.25px; letter-spacing: -0.005px; font-size: 13.8px; transform: scaleX(0.93); transform-origin: 0px 50%; top: 386.97px;">Важность:</div>
<div class="inp" style="left:724px;top:406px;width:192px"></div>
<div class="t val" style="left: 728px; letter-spacing: -0.064px; font-size: 13.8px; transform: scaleX(0.93); transform-origin: 0px 50%; top: 411.22px;">Обычная</div>
<div class="dv" style="left:894px;top:407px;height:23px"></div>
<div class="arr" style="left:901.5px;top:416px"></div>

<div class="t lbl" style="left: 724px; letter-spacing: 0px; font-size: 13.8px; transform: scaleX(0.938); transform-origin: 0px 50%; top: 815.22px;">Автор:</div>
<div class="t lnk" style="left: 770px; letter-spacing: 0px; font-size: 13.8px; transform: scaleX(0.9342); transform-origin: 0px 50%; top: 815.22px;">Администратор</div>

<!-- tooltip -->
<div class="a" style="left:606px;top:483px;width:190px;height:23px;background:#ffffe1;border:1px solid #cdc79a"></div>
<div class="t" style="left: 610px; color: rgb(0, 0, 0); letter-spacing: -0.063px; font-size: 13.8px; transform: scaleX(0.93); transform-origin: 0px 50%; top: 486.97px;">Описание телефонного звонка</div>

<!--FORM_END-->

</body></html>
